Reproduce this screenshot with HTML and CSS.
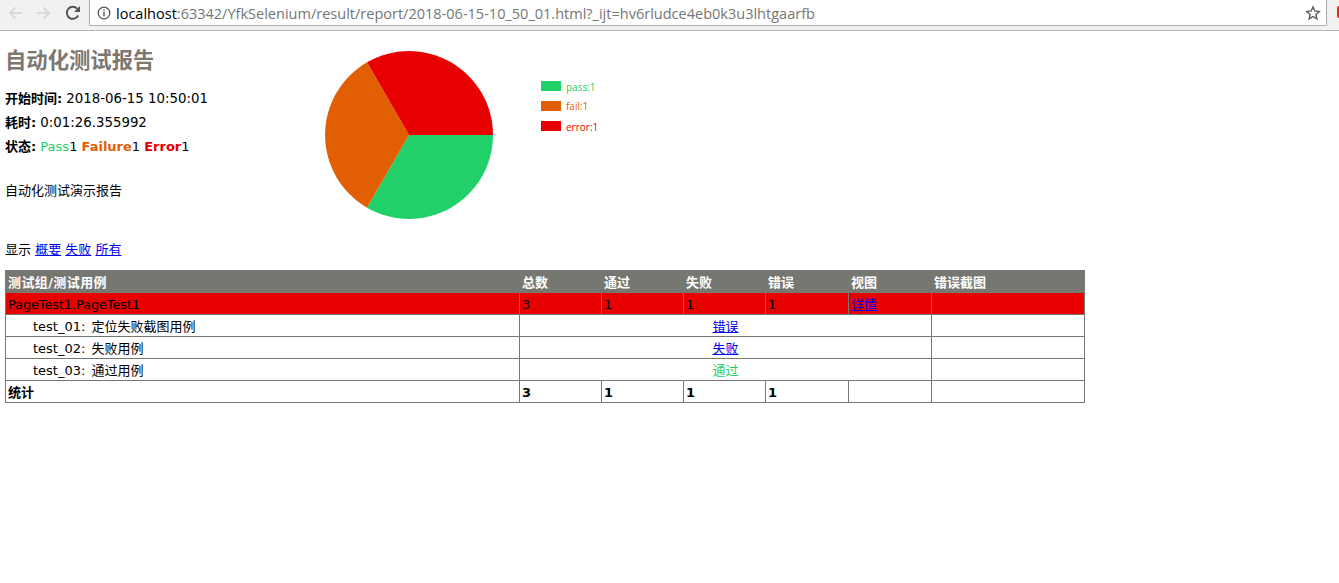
FILE: index.html
```html
<!DOCTYPE html>
<html>
<head>
  <meta charset="utf-8">
  <title>自动化测试报告</title>
  <link rel="stylesheet" href="styles.css">
</head>
<body>
  <div class="toolbar">
    <div class="nav">
      <svg class="nav-icon" viewBox="0 0 16 16"><path d="M15 8H3M8.5 2.5 3 8l5.5 5.5" fill="none" stroke="#d9d9d7" stroke-width="2"/></svg>
      <svg class="nav-icon" viewBox="0 0 16 16"><path d="M1 8h12M7.500 2.500 13 8l-5.500 5.500" fill="none" stroke="#d9d9d7" stroke-width="2"/></svg>
      <svg class="nav-icon" viewBox="0 0 16 16"><path d="M13.200 10.500A6 6 0 1 1 12.300 3.800" fill="none" stroke="#555" stroke-width="2"/><path d="M15 1v6H9z" fill="#555"/></svg>
    </div>
    <div class="omnibox">
      <svg class="info-icon" viewBox="0 0 14 14"><circle cx="7" cy="7" r="5.800" fill="none" stroke="#555" stroke-width="1.300"/><path d="M6.300 6h1.400v4.300H6.300zM6.300 3.500h1.400v1.400H6.300z" fill="#555"/></svg>
      <span class="url"><span class="host">localhost</span>:63342/YfkSelenium/result/report/2018-06-15-10_50_01.html?_ijt=hv6rludce4eb0k3u3lhtgaarfb</span>
      <svg class="star-icon" viewBox="0 0 16 16"><path d="M8 1.800 9.800 6l4.500.4-3.400 3 1 4.400L8 11.500l-3.900 2.300 1-4.400-3.400-3L6.200 6z" fill="none" stroke="#555" stroke-width="1.300"/></svg>
    </div>
    <div class="ext-dot"></div>
  </div>

  <div class="page">
    <div class="summary">
      <div class="info">
        <h1>自动化测试报告</h1>
        <p class="attr"><strong>开始时间:</strong> <span class="stamp">2018-06-15 10:50:01</span></p>
        <p class="attr"><strong>耗时:</strong> <span class="stamp">0:01:26.355992</span></p>
        <p class="attr"><strong>状态:</strong> <span class="pass">Pass</span>1 <strong class="fail">Failure</strong>1 <strong class="error">Error</strong>1</p>
        <p class="description">自动化测试演示报告</p>
      </div>
      <svg class="chart" viewBox="0 0 300 172" width="300" height="172">
        <path d="M84 85 L168 85 A84 84 0 0 1 42 157.700 Z" fill="#22d069"/>
        <path d="M84 85 L42 157.700 A84 84 0 0 1 42 12.300 Z" fill="#e15f02"/>
        <path d="M84 85 L42 12.300 A84 84 0 0 1 168 85 Z" fill="#e80000"/>
        <rect x="216" y="31" width="20" height="10" fill="#22d069"/>
        <text class="legend" x="241" y="41" fill="#22d069">pass:1</text>
        <rect x="216" y="51" width="20" height="10" fill="#e15f02"/>
        <text class="legend" x="241" y="60" fill="#e15f02">fail:1</text>
        <rect x="216" y="71" width="20" height="10" fill="#e80000"/>
        <text class="legend" x="241" y="81" fill="#e80000">error:1</text>
      </svg>
    </div>

    <p class="filter">显示 <a href="#">概要</a> <a href="#">失败</a> <a href="#">所有</a></p>

    <table class="report">
      <colgroup>
        <col class="col-name">
        <col class="col-num">
        <col class="col-num">
        <col class="col-num">
        <col class="col-wide">
        <col class="col-wide">
        <col class="col-shot">
      </colgroup>
      <tr class="head-row">
        <td class="head-name">测试组/测试用例</td>
        <td>总数</td>
        <td>通过</td>
        <td>失败</td>
        <td>错误</td>
        <td>视图</td>
        <td>错误截图</td>
      </tr>
      <tr class="error-row">
        <td class="group-name">PageTest1.PageTest1</td>
        <td>3</td>
        <td>1</td>
        <td>1</td>
        <td>1</td>
        <td><a href="#">详情</a></td>
        <td></td>
      </tr>
      <tr>
        <td class="case">test_01: 定位失败截图用例</td>
        <td class="result" colspan="5"><a href="#">错误</a></td>
        <td></td>
      </tr>
      <tr>
        <td class="case">test_02: 失败用例</td>
        <td class="result" colspan="5"><a href="#">失败</a></td>
        <td></td>
      </tr>
      <tr>
        <td class="case">test_03: 通过用例</td>
        <td class="result pass" colspan="5">通过</td>
        <td></td>
      </tr>
      <tr class="total-row">
        <td>统计</td>
        <td>3</td>
        <td>1</td>
        <td>1</td>
        <td>1</td>
        <td></td>
        <td></td>
      </tr>
    </table>
  </div>
</body>
</html>
```

FILE: styles.css
```css
html, body {
  height: 100%;
  overflow: hidden;
}

body {
  margin: 0;
  background-color: #fff;
  color: #000;
  font-family: "DejaVu Sans", Verdana, "Noto Sans CJK SC", sans-serif;
  font-size: 13px;
}

.toolbar {
  display: flex;
  align-items: flex-start;
  height: 31px;
  box-sizing: border-box;
  background-color: #f2f1f0;
  border-bottom: 1px solid #b8b6b3;
  overflow: hidden;
}

.nav {
  display: flex;
  align-items: center;
  gap: 13px;
  width: 89px;
  height: 25px;
  padding-left: 7px;
  box-sizing: border-box;
}

.nav-icon {
  width: 16px;
  height: 16px;
}

.omnibox {
  display: flex;
  align-items: center;
  flex: 1;
  height: 26px;
  box-sizing: border-box;
  padding: 0 5px 0 7px;
  background-color: #fff;
  border: 1px solid #b0aeab;
  border-top: none;
  border-radius: 0 0 2px 2px;
}

.info-icon {
  width: 14px;
  height: 14px;
  margin-right: 5px;
}

.url {
  flex: 1;
  color: #767676;
  font-family: "Open Sans", "Noto Sans", sans-serif;
  font-size: 14.520px;
  white-space: nowrap;
}

.host {
  color: #000;
}

.star-icon {
  width: 16px;
  height: 16px;
}

.ext-dot {
  width: 2px;
  height: 12px;
  margin: 6px 0 0 10px;
  background-color: #e8271c;
  border-radius: 2px 0 0 2px;
}

.page {
  padding: 0 5px;
}

.summary {
  display: flex;
  align-items: flex-start;
}

.info {
  width: 320px;
}

h1 {
  margin: 17px 0 16px;
  color: #7d7770;
  font-size: 21.33px;
  line-height: 26px;
}

.attr {
  margin: 0 0 6px;
  line-height: 18px;
}

.stamp {
  font-size: 13.33px;
}

.description {
  margin: 26px 0 0;
  line-height: 18px;
}

.chart {
  margin-top: 19px;
}

.legend {
  font-family: "Open Sans", "Noto Sans", sans-serif;
  font-size: 10px;
}

.pass {
  color: #22d069;
}

.fail {
  color: #e15f02;
}

.error {
  color: #e80000;
}

.filter {
  margin: 19px 0 11px;
  line-height: 18px;
}

a {
  color: #00e;
}

.report {
  width: 1080px;
  table-layout: fixed;
  border-collapse: collapse;
  border: 1px solid #777772;
}

.col-name {
  width: 514px;
}

.col-num {
  width: 82px;
}

.col-wide {
  width: 83px;
}

.report td {
  height: 22px;
  padding: 3px 2px 1px;
  box-sizing: border-box;
  border: 1px solid #777772;
  line-height: 16px;
  white-space: nowrap;
}

.head-row td {
  background-color: #777772;
  color: #fff;
  font-weight: bold;
}

.report .head-name {
  letter-spacing: 0.4px;
}

.error-row td {
  background-color: #e80000;
}

.report .group-name {
  letter-spacing: -0.15px;
}

.report .case {
  padding-left: 27px;
  word-spacing: 2px;
}

.result {
  text-align: center;
}

.total-row td {
  font-weight: bold;
}
```
